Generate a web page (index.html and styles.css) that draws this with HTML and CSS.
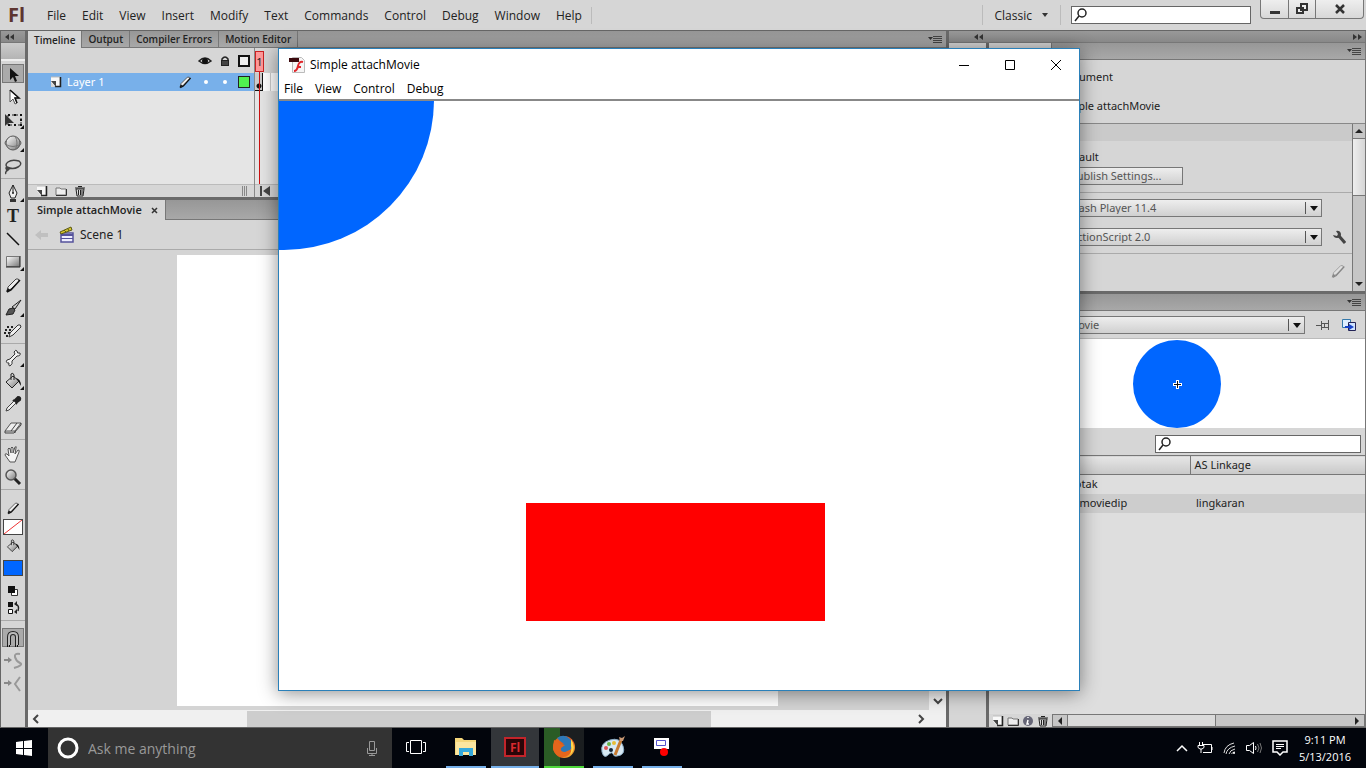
FILE: index.html
```
<!DOCTYPE html>
<html lang="en">
    <head>
        <meta charset="utf-8" />
        <title>Simple attachMovie</title>
        <link rel="stylesheet" href="styles.css">
    </head>
    <body>
        <svg class="defs" width="0" height="0" aria-hidden="true">
            <defs>
                <linearGradient id="shade" x1="0" y1="0" x2="1" y2="1"><stop offset="0" stop-color="#fff" /><stop offset="1" stop-color="#777" /></linearGradient>
                <linearGradient id="fox" x1="0" y1="0" x2="1" y2="1"><stop offset="0" stop-color="#e8701a" /><stop offset=".55" stop-color="#e0531a" /><stop offset="1" stop-color="#ffd23c" /></linearGradient>
                <symbol id="newpage" viewBox="0 0 12 12"><path d="M1 1h9v9H1z" fill="#f8f8f8" /><path d="M1 1h9v9" fill="none" stroke="#bbb" /><path d="M10.500 1v9.500H5" fill="none" stroke="#222" stroke-width="1.500" /><path d="M1 5h5v6z" fill="#444" /><path d="M1 6v5h4z" fill="#d6d6d6" /></symbol>
                <symbol id="folder" viewBox="0 0 12 12"><path d="M1 3h4l1 1h5v6H1z" fill="#eee" stroke="#777" /><path d="M1 10.500h10.500V4" fill="none" stroke="#333" /></symbol>
                <symbol id="trash" viewBox="0 0 12 12"><path d="M2 4h8l-1 7H3z" fill="#ddd" stroke="#222" /><path d="M1 3h10M4 1.500h4M4.500 5v5M6.500 5v5M8 5v5" stroke="#222" fill="none" /></symbol>
                <symbol id="lens" viewBox="0 0 14 14"><circle cx="8" cy="5" r="4" fill="none" stroke="#222" stroke-width="1.500" /><path d="M5 8l-4 5" stroke="#222" stroke-width="1.500" /></symbol>
                <symbol id="panelmenu" viewBox="0 0 14 9"><path d="M0 2h5L2.500 5z" fill="#333" /><path d="M5 1.500h9M5 3.500h9M5 5.500h9M5 7.500h9" stroke="#444" /></symbol>
                <symbol id="collapse" viewBox="0 0 9 6"><path d="M4 0v6L0 3zM9 0v6L5 3z" fill="#333" /></symbol>
                <symbol id="pencil" viewBox="0 0 20 20"><path d="M4 16l1-4 8-8q3-1 3 2l-8 8z" fill="#eee" stroke="#444" /><path d="M17 5l-9 10-4 2" fill="none" stroke="#111" stroke-width="1.500" /><path d="M3 17l2-4 2 2z" fill="#111" /></symbol>
                <symbol id="bucket" viewBox="0 0 20 20"><path d="M3 11l7-6 6 5-7 7z" fill="url(#shade)" stroke="#222" /><path d="M8 9V3q2-2 3 1v5" fill="none" stroke="#222" /><path d="M13 7q5 1 5 8l-3-5z" fill="#111" /></symbol>
            </defs>
        </svg>
        <div class="desktop">
            <header class="menubar">
                <div class="logo">Fl</div>
                <nav class="menu">
                    <a href="#">File</a>
                    <a href="#">Edit</a>
                    <a href="#">View</a>
                    <a href="#">Insert</a>
                    <a href="#">Modify</a>
                    <a href="#">Text</a>
                    <a href="#">Commands</a>
                    <a href="#">Control</a>
                    <a href="#">Debug</a>
                    <a href="#">Window</a>
                    <a href="#">Help</a>
                </nav>
                <button class="classic">Classic <svg width="6" height="4"><path d="M0 0h6L3 4z" fill="#333" /></svg></button>
                <label class="search">
                    <svg width="14" height="14"><use href="#lens" /></svg>
                    <input type="text" aria-label="Search help">
                </label>
                <div class="winbuttons">
                    <button aria-label="Minimize"><svg width="12" height="12"><path d="M1 8h10v3H1z" fill="#333" /></svg></button>
                    <button aria-label="Restore"><svg width="12" height="12"><path d="M5 1h6v6H5zM1 5h6v5H1z" fill="#eee" stroke="#333" stroke-width="2" /></svg></button>
                    <button aria-label="Close"><svg width="12" height="12"><path d="M2 2l8 8M10 2l-8 8" stroke="#333" stroke-width="2.500" /></svg></button>
                </div>
            </header>

            <div class="workspace">
                <aside class="tools">
                    <div class="strip"><svg width="9" height="6"><use href="#collapse" /></svg></div>
                    <div class="grip"></div>
                    <div class="group">
                        <button class="tool on" aria-label="Selection"><svg width="20" height="20"><path d="M7 3v12l3-3 2 5 2-1-2-5h4z" fill="#111" /></svg></button>
                        <button class="tool" aria-label="Subselection"><svg width="20" height="20"><path d="M7 3v12l3-3 2 5 2-1-2-5h4z" fill="#fff" stroke="#555" /><path d="M7 3l9 8h-4l2 5" fill="none" stroke="#111" stroke-width="1.500" /></svg></button>
                        <button class="tool more" aria-label="Free transform"><svg width="20" height="20"><path d="M5 5h13v10H5z" fill="none" stroke="#222" stroke-dasharray="2 2" /><path d="M5 4h2v2H5zM11 4h2v2h-2zM17 4h2v2h-2zM17 9h2v2h-2zM17 14h2v2h-2zM11 14h2v2h-2zM5 14h2v2H5z" fill="#111" /><path d="M2 4v12l3-3h6z" fill="#333" /></svg></button>
                        <button class="tool more" aria-label="3D rotation"><svg width="20" height="20"><ellipse cx="10" cy="10" rx="8" ry="5" fill="none" stroke="#666" /><circle cx="10" cy="10" r="7" fill="url(#shade)" stroke="#555" /><path d="M2 11q8 5 16 0M12 3q4 7 0 14" fill="none" stroke="#777" /></svg></button>
                        <button class="tool" aria-label="Lasso"><svg width="20" height="20"><path d="M5 12q-4-3 0-6t11-1q4 3-1 6t-11 0q-2 1 0 3-2 3-1 4M3 12l3 1-2 2" fill="none" stroke="#444" stroke-width="1.500" /></svg></button>
                    </div>
                    <div class="group">
                        <button class="tool more" aria-label="Pen"><svg width="20" height="20"><path d="M10 2l4 8-2 5H8l-2-5z" fill="#eee" stroke="#222" /><path d="M10 2v8" stroke="#222" /><circle cx="10" cy="10" r="1" fill="#222" /><path d="M7 16h6v3H7z" fill="#333" /></svg></button>
                        <button class="tool letter" aria-label="Text">T</button>
                        <button class="tool" aria-label="Line"><svg width="20" height="20"><path d="M4 4l12 12" stroke="#111" stroke-width="1.500" /></svg></button>
                        <button class="tool more" aria-label="Rectangle"><svg width="20" height="20"><path d="M3.500 4.500h13v10h-13z" fill="url(#shade)" stroke="#777" /><path d="M3 15h14V4" fill="none" stroke="#222" /></svg></button>
                        <button class="tool" aria-label="Pencil"><svg width="20" height="20"><use href="#pencil" /></svg></button>
                        <button class="tool more" aria-label="Brush"><svg width="20" height="20"><path d="M18 2l-9 7 3 2z" fill="#ccc" stroke="#222" /><path d="M3 17l3-6 4-1 2 2-2 4z" fill="#555" stroke="#222" /></svg></button>
                        <button class="tool" aria-label="Deco"><svg width="20" height="20"><path d="M4 6h8M2 9h8M1 12h6M3 15h3" stroke="#222" stroke-width="2" stroke-dasharray="2 2" /><path d="M6 16l1-4 8-8q3-1 3 2l-8 8z" fill="#eee" stroke="#333" /></svg></button>
                    </div>
                    <div class="group">
                        <button class="tool more" aria-label="Bone"><svg width="20" height="20"><path d="M4 12l3-1 5-5-1-2q2-3 3-1 0 3 3 2 1 3-3 3l-5 5q1 3-2 5-2 0-1-3-4 0-2-3z" fill="#f2f2f2" stroke="#333" /></svg></button>
                        <button class="tool more" aria-label="Paint bucket"><svg width="20" height="20"><use href="#bucket" /></svg></button>
                        <button class="tool" aria-label="Eyedropper"><svg width="20" height="20"><path d="M10 6l4 4M11 7l4-4q3 0 2 3l-4 3z" fill="#222" stroke="#222" stroke-width="2" /><path d="M11 7L4 14l-1 3 3-1 7-7z" fill="#eee" stroke="#444" /></svg></button>
                        <button class="tool" aria-label="Eraser"><svg width="20" height="20"><path d="M2 14l6-8h10l-6 8z" fill="#eee" stroke="#555" /><path d="M2 14v2h9l7-8V6M8 14l6-8M12 14v2" fill="none" stroke="#444" /></svg></button>
                    </div>
                    <div class="group">
                        <button class="tool" aria-label="Hand"><svg width="20" height="20"><path d="M7 18l-5-7q0-2 2-1l2 2-1-7q1-2 2 0l1 4V4q1-2 2 0v5l2-6q2-1 1 1l-1 6 3-4q2 0 1 2l-2 5-2 5z" fill="#f4f4f4" stroke="#555" /></svg></button>
                        <button class="tool" aria-label="Zoom"><svg width="20" height="20"><path d="M11 11l6 6" stroke="#222" stroke-width="3" /><circle cx="8" cy="8" r="5" fill="url(#shade)" stroke="#555" stroke-width="1.500" /></svg></button>
                    </div>
                    <div class="group colors">
                        <button class="tool" aria-label="Stroke color"><svg width="16" height="16" viewBox="0 0 20 20"><use href="#pencil" /></svg></button>
                        <button class="swatch" aria-label="No stroke"><svg width="18" height="14"><path d="M0 14L18 0" stroke="#e33" /></svg></button>
                        <button class="tool" aria-label="Fill color"><svg width="16" height="16" viewBox="0 0 20 20"><use href="#bucket" /></svg></button>
                        <button class="swatch fill" aria-label="Blue fill"></button>
                        <button class="tool short" aria-label="Black and white"><svg width="12" height="12"><path d="M4.500 4.500h6v6h-6z" fill="#fff" stroke="#333" /><path d="M1 1h7v7H1z" fill="#111" /></svg></button>
                        <button class="tool short" aria-label="Swap colors"><svg width="14" height="14"><path d="M2 1h5v5H2z" fill="#111" /><path d="M2.500 8.500h4v4h-4z" fill="#fff" stroke="#111" /><path d="M9 3q5 1 3 7" fill="none" stroke="#222" stroke-width="1.500" /><path d="M8 3l3-3v5zM8 11l3-3v5z" fill="#222" /></svg></button>
                    </div>
                    <div class="group options">
                        <button class="tool on" aria-label="Snap to objects"><svg width="20" height="20"><path d="M6 16V8q0-4 4-4t4 4v8" fill="none" stroke="#222" stroke-width="4" /><path d="M6 16V8q0-4 4-4t4 4v8" fill="none" stroke="#bbb" stroke-width="2" /><path d="M4 17h4M12 17h4" stroke="#111" stroke-width="2" stroke-dasharray="1 1" /></svg></button>
                        <button class="tool" aria-label="Smooth"><svg width="20" height="20"><path d="M1 9h5" stroke="#888" stroke-width="2" /><path d="M5 6l4 3-4 3z" fill="#888" /><path d="M17 3q-6-1-5 3t5 6-6 5" fill="none" stroke="#999" stroke-width="2" /></svg></button>
                        <button class="tool" aria-label="Straighten"><svg width="20" height="20"><path d="M1 9h5" stroke="#888" stroke-width="2" /><path d="M5 6l4 3-4 3z" fill="#888" /><path d="M17 3l-5 7 5 7" fill="none" stroke="#999" stroke-width="2" /></svg></button>
                    </div>
                </aside>

                <main class="editor">
                    <section class="timeline">
                        <div class="tabs">
                            <button class="tab active">Timeline</button>
                            <button class="tab">Output</button>
                            <button class="tab">Compiler Errors</button>
                            <button class="tab">Motion Editor</button>
                            <svg class="panelmenu" width="14" height="9"><use href="#panelmenu" /></svg>
                        </div>
                        <div class="timebody">
                            <div class="layers">
                                <div class="layerhead">
                                    <svg width="14" height="12"><path d="M1 6q6-6 12 0-6 5-12 0z" fill="#ddd" stroke="#222" stroke-width="1.500" /><circle cx="7" cy="6" r="3" fill="#111" /></svg>
                                    <svg width="12" height="12"><path d="M3 6V4q3-4 6 0v2" fill="none" stroke="#222" stroke-width="1.500" /><path d="M2 5h8v6H2z" fill="#222" /><path d="M3 7h6M3 9h6" stroke="#666" /></svg>
                                    <svg width="12" height="12"><path d="M1 1h10v10H1z" fill="#eee" stroke="#111" stroke-width="2" /></svg>
                                </div>
                                <div class="layer">
                                    <svg width="12" height="12"><use href="#newpage" /></svg>
                                    <span class="layername">Layer 1</span>
                                    <svg width="16" height="16" viewBox="0 0 20 20"><use href="#pencil" /></svg>
                                    <i class="dot"></i>
                                    <i class="dot"></i>
                                    <i class="outline"></i>
                                </div>
                                <div class="layerfoot">
                                    <svg width="12" height="12"><use href="#newpage" /></svg>
                                    <svg width="12" height="12"><use href="#folder" /></svg>
                                    <svg width="12" height="12"><use href="#trash" /></svg>
                                    <svg class="splitter" width="6" height="10"><path d="M.5 0v10M2.500 0v10M4.500 0v10" stroke="#888" /></svg>
                                </div>
                            </div>
                            <div class="frames">
                                <div class="ruler"><span class="playhead">1</span></div>
                                <div class="framerow"><span class="keyframe"></span></div>
                                <div class="framefoot"><svg width="12" height="10"><path d="M1 0h2v10H1zM11 0v10L4 5z" fill="#444" /></svg></div>
                            </div>
                        </div>
                    </section>
                    <section class="document">
                        <div class="tabs doctabs">
                            <button class="tab active">Simple attachMovie <svg width="7" height="7"><path d="M1 1l5 5M6 1L1 6" stroke="#333" stroke-width="1.500" /></svg></button>
                        </div>
                        <div class="editbar">
                            <svg width="14" height="12"><path d="M0 6l6-5v3h7v4H6v3z" fill="#c0c0c0" /></svg>
                            <svg width="16" height="18"><path d="M2 7h12v9H2z" fill="#eef" stroke="#55539c" stroke-width="1.500" /><path d="M2 8h12v2H2zM2 12h12v1H2z" fill="#55539c" /><path d="M1 6l11-5 1 3-11 4z" fill="#d5c52a" stroke="#5c5a15" /><path d="M5 4l2 2M9 3l1 2" stroke="#5c5a15" /></svg>
                            <span>Scene 1</span>
                        </div>
                        <div class="stagerow">
                            <div class="pasteboard"><div class="stage"></div></div>
                            <div class="vscroll"><svg width="10" height="8"><path d="M1 1l4 4 4-4" fill="none" stroke="#444" stroke-width="2" /></svg></div>
                        </div>
                        <div class="hscroll">
                            <svg width="8" height="10"><path d="M6 1L2 5l4 4" fill="none" stroke="#444" stroke-width="2" /></svg>
                            <div class="track"><div class="thumb"></div></div>
                            <svg width="8" height="10"><path d="M2 1l4 4-4 4" fill="none" stroke="#444" stroke-width="2" /></svg>
                        </div>
                    </section>
                </main>

                <div class="docks">
                    <div class="strip">
                        <svg width="9" height="6"><use href="#collapse" /></svg>
                        <svg width="9" height="6" viewBox="0 0 9 6"><path d="M0 0v6l4-3zM5 0v6l4-3z" fill="#333" /></svg>
                    </div>
                    <div class="columns">
                        <div class="icondock"></div>
                        <div class="panels">
                            <section class="properties">
                                <div class="tabs"><span class="tab active blank"></span><svg class="panelmenu" width="14" height="9"><use href="#panelmenu" /></svg></div>
                                <div class="docinfo">
                                    <p>Document</p>
                                    <p>Simple attachMovie</p>
                                </div>
                                <div class="scroller">
                                    <div class="settings">
                                        <div class="sectionhead"></div>
                                        <div class="publish">
                                            <span>Default</span>
                                            <button class="push">Publish Settings...</button>
                                        </div>
                                        <div class="targets">
                                            <span class="drop"><select aria-label="Player"><option>Flash Player 11.4</option></select><svg width="14" height="14"><path d="M1.500 1v12" stroke="#555" /><path d="M6 5h8l-4 5z" fill="#111" /></svg></span>
                                            <span class="drop"><select aria-label="Script"><option>ActionScript 2.0</option></select><svg width="14" height="14"><path d="M1.500 1v12" stroke="#555" /><path d="M6 5h8l-4 5z" fill="#111" /></svg></span>
                                            <svg width="14" height="14"><path d="M7 6l6 7" stroke="#444" stroke-width="3" /><path d="M4 1q4-1 5 3 0 4-4 4-3 0-4-3l4 1 1-2z" fill="#444" /></svg>
                                        </div>
                                        <div class="profile"><svg width="18" height="18" viewBox="0 0 20 20" opacity=".4"><use href="#pencil" /></svg></div>
                                    </div>
                                    <div class="vbar">
                                        <svg width="12" height="14"><path d="M2 9h8L6 5z" fill="#222" /></svg>
                                        <div class="vthumb"></div>
                                        <svg width="12" height="14"><path d="M2 5h8l-4 4z" fill="#222" /></svg>
                                    </div>
                                </div>
                            </section>
                            <section class="library">
                                <div class="tabs"><svg class="panelmenu" width="14" height="9"><use href="#panelmenu" /></svg></div>
                                <div class="libpick">
                                    <span class="drop"><select aria-label="Library document"><option>Simple attachMovie</option></select><svg width="14" height="14"><path d="M1.500 1v12" stroke="#555" /><path d="M6 5h8l-4 5z" fill="#111" /></svg></span>
                                    <svg width="14" height="12"><path d="M0 6.500h5M5.500 2v9M8.500 4v5M12.500 1v10M5 4.500h8M5 8.500h8" fill="none" stroke="#555" /></svg>
                                    <svg width="16" height="14"><path d="M1.500 1.500h8v8h-8z" fill="#ddeeff" stroke="#3478aa" /><path d="M7.500 4.500h7v8h-7z" fill="#cfe3ff" stroke="#225" /><path d="M4 8h4V6l5 3-5 3v-2H4z" fill="#1742c8" /></svg>
                                </div>
                                <div class="preview">
                                    <svg width="88" height="88"><circle cx="44" cy="44" r="44" fill="#0066ff" /><path d="M40 44.500h9M44.500 40v9" stroke="#fff" stroke-width="3" /><path d="M41 44.500h7M44.500 41v7" stroke="#111" /></svg>
                                </div>
                                <div class="libsearch">
                                    <label class="search">
                                        <svg width="14" height="14"><use href="#lens" /></svg>
                                        <input type="text" aria-label="Search library">
                                    </label>
                                </div>
                                <table class="items">
                                    <thead>
                                        <tr><th></th><th>AS Linkage</th></tr>
                                    </thead>
                                    <tbody>
                                        <tr><td>kotak</td><td></td></tr>
                                        <tr class="picked"><td>lingkaran_moviedip</td><td>lingkaran</td></tr>
                                    </tbody>
                                </table>
                                <div class="libfoot">
                                    <svg width="12" height="12"><use href="#newpage" /></svg>
                                    <svg width="12" height="12"><use href="#folder" /></svg>
                                    <svg width="12" height="12"><circle cx="6" cy="6" r="5" fill="#667" /><path d="M6 5l-1 4h2M6 2v1" stroke="#fff" stroke-width="1.500" fill="none" /></svg>
                                    <svg width="12" height="12"><use href="#trash" /></svg>
                                    <div class="hbar">
                                        <svg width="14" height="10"><path d="M9 1v8L5 5z" fill="#222" /></svg>
                                        <div class="hthumb"></div>
                                        <svg width="14" height="10"><path d="M5 1v8l4-4z" fill="#222" /></svg>
                                    </div>
                                </div>
                            </section>
                        </div>
                    </div>
                </div>
            </div>

            <footer class="taskbar">
                <button class="start" aria-label="Start"><svg width="16" height="16"><path d="M0 2l7-1v7H0zM8 1l8-1v8H8zM0 9h7v6l-7-1zM8 9h8v7l-8-1z" fill="#fff" /></svg></button>
                <label class="cortana">
                    <svg width="22" height="22"><circle cx="11" cy="11" r="9" fill="none" stroke="#fff" stroke-width="3" /></svg>
                    <input type="text" aria-label="Search" placeholder="Ask me anything">
                    <svg width="12" height="16"><path d="M3.500 1.500h5v9h-5zM1.500 8v5.500h9V8M6 13v3M3 15.500h6" fill="none" stroke="#999" /></svg>
                </label>
                <div class="apps">
                    <button class="app plain" aria-label="Task view"><svg width="20" height="16"><path d="M4.500 1.500h11v13h-11zM3 3.500H.5v9H3M17 3.500h2.500v9H17" fill="none" stroke="#fff" /></svg></button>
                    <button class="app" aria-label="File Explorer"><svg width="22" height="20"><path d="M0 1h7l2 2h12v15H0z" fill="#f5d77b" /><path d="M1 5h20v13H1z" fill="#fbe6a0" /><path d="M4 11h14v8h-4v-4H8v4H4z" fill="#35a9dc" /></svg></button>
                    <button class="app current" aria-label="Flash"><span class="flicon">Fl</span></button>
                    <button class="app firefox" aria-label="Firefox"><svg width="24" height="24"><circle cx="12" cy="12" r="11" fill="url(#fox)" /><path d="M5 3q7-5 13 1 4 5 1 10t-9 4q-5-3-2-7l4-2-4-3z" fill="#2d78b8" /><path d="M2 5q4 1 6 4l5 1-4 3q-1 4 4 4l7-3q-3 9-10 8T1 14z" fill="#e4661c" /><path d="M19 4q6 9-1 16 2-5 1-9z" fill="#ffd84c" /></svg></button>
                    <button class="app" aria-label="Paint"><svg width="26" height="24"><path d="M2 17Q0 8 10 5t13 6-6 10q-3 1-4-2t-5 1-6-3z" fill="#d7e9f4" stroke="#8bacc4" /><circle cx="6" cy="13" r="2" fill="#d55" /><circle cx="9" cy="9" r="2" fill="#68b447" /><circle cx="14" cy="8" r="2" fill="#e7bd36" /><circle cx="11" cy="15" r="2" fill="#123" /><path d="M15 20l6-15" stroke="#c77b32" stroke-width="3" /><path d="M20 6l-1-4 3 1 3-2-2 5z" fill="#c99873" /></svg></button>
                    <button class="app" aria-label="Flash Player"><svg width="18" height="20"><path d="M1 1h15v11H1z" fill="#fff" /><path d="M3.500 3.500h9v5h-9z" fill="none" stroke="#5553cc" /><circle cx="11" cy="15" r="4" fill="#f00" /></svg></button>
                </div>
                <div class="tray">
                    <svg width="12" height="8"><path d="M1 7l5-5 5 5" fill="none" stroke="#fff" stroke-width="1.500" /></svg>
                    <svg width="16" height="12"><path d="M5 2.500h9.500v8H6M15 5v3M2.500 0v3M5.500 0v3M1 3.500h6v2L5 7H3L1 5.500zM4 7v4" fill="none" stroke="#fff" /></svg>
                    <svg width="14" height="14"><path d="M2 12Q3 4 12 2M4 13q1-6 9-8M7 13q1-4 6-5M9.500 13q1-2 3.500-2" fill="none" stroke="#ddd" /><circle cx="12" cy="12" r="1" fill="#fff" /></svg>
                    <svg width="18" height="14"><path d="M1.500 4.500h3l4-3v11l-4-3h-3z" fill="none" stroke="#fff" /><path d="M10.500 5q1 2 0 4" fill="none" stroke="#fff" /><path d="M12.500 3q3 4 0 8M15 2q3 5 0 10" fill="none" stroke="#777" /></svg>
                    <svg width="16" height="16"><path d="M1 1h14v11h-4l-3 3-3-3H1z" fill="none" stroke="#fff" stroke-width="1.500" /><path d="M4 4.500h8M4 6.500h8M4 8.500h5" stroke="#fff" /></svg>
                    <div class="clock"><span>9:11 PM</span><span>5/13/2016</span></div>
                </div>
            </footer>

            <div class="player">
                <div class="titlebar">
                    <svg width="16" height="16"><path d="M3.500.5h9l3 3v12h-12z" fill="#f5f5f5" stroke="#bbb" /><path d="M0 1h10v4H0z" fill="#3c0a0e" /><path d="M5 14q3 0 4-5t5-4M8 10h4" fill="none" stroke="#e0262b" stroke-width="2" /></svg>
                    <span class="title">Simple attachMovie</span>
                    <button aria-label="Minimize"><svg width="12" height="12"><path d="M1 6.500h10" stroke="#000" /></svg></button>
                    <button aria-label="Maximize"><svg width="12" height="12"><path d="M1.500 1.500h9v9h-9z" fill="none" stroke="#000" /></svg></button>
                    <button aria-label="Close"><svg width="12" height="12"><path d="M1 1l10 10M11 1L1 11" stroke="#000" /></svg></button>
                </div>
                <nav class="playermenu">
                    <a href="#">File</a>
                    <a href="#">View</a>
                    <a href="#">Control</a>
                    <a href="#">Debug</a>
                </nav>
                <svg class="movie" viewBox="0 0 800 589">
                    <circle cx="5" cy="-1" r="150" fill="#0066ff" />
                    <rect x="247" y="402" width="299" height="118" fill="#ff0000" />
                </svg>
            </div>
        </div>
    </body>
</html>
```
FILE: styles.css
```
* {
    box-sizing: border-box;
}
body {
    margin: 0;
    font-family: "Noto Sans", "Open Sans", sans-serif;
    font-size: 11px;
    color: #222;
    background-color: #d6d6d6;
}
button, input, select {
    font: inherit;
    color: inherit;
    margin: 0;
    padding: 0;
    border: 0;
    background: none;
}
a {
    color: inherit;
    text-decoration: none;
}
p {
    margin: 0;
}
svg {
    flex: none;
    display: block;
}
.defs {
    position: absolute;
}
.desktop {
    position: relative;
    display: flex;
    flex-direction: column;
    height: 100vh;
    min-height: 740px;
    overflow: hidden;
}

/* application menu */
.menubar {
    display: flex;
    align-items: center;
    height: 30px;
    padding-right: 2px;
    background-color: #d6d6d6;
    font-family: "Open Sans", sans-serif;
    font-size: 12px;
}
.logo {
    width: 39px;
    padding-left: 8px;
    font-size: 20px;
    font-weight: bold;
    line-height: 28px;
    color: #5d3530;
}
.menu {
    display: flex;
    flex: 1;
}
.menu a {
    padding: 0 8px;
}
.menu a:last-child {
    padding-right: 9px;
    border-right: 1px solid #bbb;
}
.classic {
    display: flex;
    align-items: center;
    gap: 10px;
    height: 20px;
    padding: 0 12px;
    border: solid #bbb;
    border-width: 0 1px;
}
.search {
    display: flex;
    align-items: center;
    height: 18px;
    padding: 0 2px;
    background-color: #fff;
    border: 1px solid #666;
}
.search input {
    flex: 1;
    min-width: 0;
    outline: none;
}
.menubar .search {
    width: 180px;
    margin: 0 9px 0 10px;
}
.winbuttons {
    display: flex;
    align-self: flex-start;
    height: 19px;
    border: 1px solid #777;
    border-top: 0;
    border-radius: 0 0 4px 4px;
    background: linear-gradient(#eee, #d8d8d8);
}
.winbuttons button {
    display: grid;
    place-items: center;
    width: 27px;
}
.winbuttons button + button {
    border-left: 1px solid #777;
}
.winbuttons button:last-child {
    width: 48px;
}

/* shared panel parts */
.workspace {
    display: flex;
    flex: 1;
    min-height: 0;
    border-top: 1px solid #666;
    border-bottom: 1px solid #666;
}
.strip {
    display: flex;
    justify-content: space-between;
    align-items: center;
    height: 12px;
    padding: 0 4px;
    background: linear-gradient(#999, #888);
    border-bottom: 1px solid #777;
}
.tabs {
    display: flex;
    height: 17px;
    background: linear-gradient(#979797, #a8a8a8);
    border-bottom: 1px solid #777;
}
.tab {
    padding: 0 6px;
    font-family: "Open Sans", sans-serif;
    font-weight: 600;
    font-size: 10px;
    line-height: 16px;
    color: #222;
    border-right: 1px solid #777;
}
.tab.active {
    margin-bottom: -1px;
    background-color: #d6d6d6;
}
.panelmenu {
    margin: 4px 4px 0 auto;
}

/* tools */
.tools {
    width: 28px;
    border-left: 1px solid #666;
    border-right: 3px solid #6a6a6a;
    background-color: #d6d6d6;
}
.grip {
    height: 18px;
    margin-bottom: 1px;
    background: linear-gradient(#ccc, #b4b4b4);
    border-bottom: 2px solid #eee;
}
.group {
    display: flex;
    flex-direction: column;
    align-items: center;
    padding-bottom: 1px;
    margin-bottom: 2px;
    border-bottom: 1px solid #aaa;
}
.tool {
    position: relative;
    display: grid;
    place-items: center;
    width: 22px;
    height: 23px;
}
.tool.on {
    height: 19px;
    margin: 2px 0;
    background-color: #aaa;
    border: 1px solid #777;
}
.tool.more::after {
    content: "";
    position: absolute;
    right: 0;
    bottom: 2px;
    border: 2px solid;
    border-color: transparent #111 #111 transparent;
}
.letter {
    font-family: "Liberation Serif", serif;
    font-weight: bold;
    font-size: 18px;
    line-height: 22px;
}
.colors {
    padding: 5px 0 4px;
}
.colors .tool {
    height: 22px;
}
.colors .short {
    height: 17px;
}
.short:nth-child(5) {
    margin-top: 3px;
}
.swatch {
    width: 20px;
    height: 16px;
    background-color: #fff;
    border: 1px solid #444;
}
.swatch.fill {
    margin: 3px 0;
    background-color: #0066ff;
}
.options {
    border-bottom: 0;
    padding-top: 3px;
}

/* timeline */
.editor {
    display: flex;
    flex-direction: column;
    flex: 1;
    min-width: 0;
}
.timebody {
    display: flex;
    height: 152px;
    border-bottom: 3px solid #6a6a6a;
}
.layers {
    display: flex;
    flex-direction: column;
    width: 227px;
    background-color: #e5e5e5;
    border-right: 1px solid #888;
}
.layerhead {
    display: flex;
    justify-content: flex-end;
    align-items: center;
    gap: 7px;
    height: 25px;
    padding-right: 4px;
    background-color: #d6d6d6;
}
.layer {
    display: flex;
    align-items: center;
    height: 18px;
    padding: 0 4px 0 22px;
    background-color: #78b0ea;
}
.layername {
    flex: 1;
    padding-left: 5px;
    line-height: 14px;
    color: #fff;
}
.dot {
    width: 4px;
    height: 4px;
    margin-left: 15px;
    border-radius: 50%;
    background-color: #fff;
}
.layer svg + .dot {
    margin-left: 11px;
}
.outline {
    width: 12px;
    height: 12px;
    margin-left: 11px;
    background-color: #50f050;
    border: 1px solid #222;
}
.layerfoot {
    display: flex;
    align-items: center;
    gap: 7px;
    height: 13px;
    margin-top: auto;
    padding: 0 6px 0 8px;
    background-color: #d6d6d6;
    border-top: 1px solid #bbb;
}
.splitter {
    margin-left: auto;
}
.frames {
    display: flex;
    flex-direction: column;
    flex: 1;
    background-color: #e5e5e5;
}
.ruler {
    height: 25px;
    padding-top: 3px;
    background-color: #d6d6d6;
}
.playhead {
    position: relative;
    display: block;
    width: 9px;
    height: 21px;
    line-height: 19px;
    text-align: center;
    background-color: #f99;
    border: 1px solid #c22;
}
.playhead::after {
    content: "";
    position: absolute;
    left: 3px;
    top: 20px;
    width: 1px;
    height: 112px;
    background-color: #c11;
}
.framerow {
    height: 18px;
    background: repeating-linear-gradient(90deg, #fff 0 7px, #ccc 7px 8px);
}
.keyframe {
    display: block;
    width: 8px;
    height: 18px;
    border: solid #111;
    border-width: 0 1px 1px 0;
    background: radial-gradient(circle at 4px 13px, #111 2px, #ccc 3px);
}
.framefoot {
    height: 13px;
    margin-top: auto;
    padding: 1px 4px;
    background-color: #d6d6d6;
    border-top: 1px solid #bbb;
}

/* document window */
.document {
    display: flex;
    flex-direction: column;
    flex: 1;
    min-height: 0;
}
.doctabs {
    height: 20px;
}
.doctabs .tab {
    display: flex;
    align-items: center;
    gap: 9px;
    padding: 0 7px 0 9px;
    font-size: 11px;
}
.editbar {
    display: flex;
    align-items: center;
    gap: 5px;
    height: 30px;
    padding-left: 7px;
    font-size: 12px;
    border-bottom: 1px solid #aaa;
}
.editbar svg:first-child {
    margin-right: 5px;
}
.stagerow {
    display: flex;
    flex: 1;
    min-height: 0;
}
.pasteboard {
    display: flex;
    justify-content: center;
    flex: 1;
    padding: 5px 2px 4px 0;
    background-color: #d4d4d4;
}
.stage {
    width: 601px;
    background-color: #fff;
}
.vscroll {
    display: flex;
    justify-content: center;
    align-items: flex-end;
    width: 17px;
    padding-bottom: 4px;
    background-color: #f0f0f0;
}
.hscroll {
    display: flex;
    align-items: center;
    height: 17px;
    padding: 0 21px 0 4px;
    background-color: #f0f0f0;
}
.track {
    display: grid;
    grid-template-columns: 207fr 464fr 206fr;
    flex: 1;
}
.thumb {
    grid-column: 2;
    height: 16px;
    background-color: #cdcdcd;
}

/* docked panels */
.docks {
    display: flex;
    flex-direction: column;
    width: 420px;
    border-left: 3px solid #6a6a6a;
    border-right: 1px solid #777;
}
.docks > .strip {
    padding: 0 3px 0 25px;
}
.columns {
    display: flex;
    flex: 1;
    min-height: 0;
}
.icondock {
    width: 40px;
    border-right: 3px solid #6a6a6a;
    background-color: #d6d6d6;
}
.panels {
    display: flex;
    flex-direction: column;
    flex: 1;
    min-width: 0;
}
.blank {
    width: 63px;
}
.docinfo {
    height: 63px;
    padding: 2px 0 0 70px;
    line-height: 29px;
}
.scroller {
    display: flex;
    height: 168px;
    border-top: 1px solid #888;
}
.settings {
    flex: 1;
}
.sectionhead {
    height: 17px;
    background-color: #cacaca;
}
.publish {
    display: flex;
    flex-direction: column;
    align-items: flex-start;
    height: 52px;
    padding: 8px 0 0 72px;
    line-height: 15px;
    border-bottom: 1px solid #aaa;
}
.push {
    height: 18px;
    margin-top: 3px;
    padding: 0 20px 0 8px;
    line-height: 14px;
    color: #555;
    border: 1px solid #777;
    background: linear-gradient(#eee, #d0d0d0);
}
.targets {
    display: grid;
    grid-template-columns: 1fr 14px;
    align-items: center;
    gap: 11px 10px;
    padding: 6px 6px 7px 74px;
    border-bottom: 1px solid #aaa;
}
.targets .drop {
    grid-column: 1;
}
.drop {
    position: relative;
    display: block;
}
.drop select {
    display: block;
    width: 100%;
    height: 18px;
    padding: 0 20px 2px 6px;
    color: #555;
    border: 1px solid #777;
    border-radius: 0;
    background: linear-gradient(#eee, #d0d0d0);
    appearance: none;
}
.drop svg {
    position: absolute;
    right: 4px;
    top: 2px;
    pointer-events: none;
}
.profile {
    display: flex;
    justify-content: flex-end;
    padding: 8px 5px 0 0;
}
.vbar {
    display: flex;
    flex-direction: column;
    width: 13px;
    border-left: 1px solid #777;
    background-color: #c6c6c6;
}
.vthumb {
    height: 58px;
    margin-bottom: auto;
    border: solid #777;
    border-width: 1px 0;
    background: linear-gradient(90deg, #eee, #d6d6d6);
}
.library {
    display: flex;
    flex-direction: column;
    flex: 1;
    min-height: 0;
    border-top: 3px solid #6a6a6a;
    background-color: #dedede;
}
.libpick {
    display: flex;
    align-items: center;
    gap: 11px;
    height: 28px;
    padding: 0 8px 0 4px;
    background-color: #d6d6d6;
    border-bottom: 1px solid #bbb;
}
.libpick .drop {
    flex: 1;
}
.libpick select {
    padding-left: 4px;
}
.preview {
    display: flex;
    justify-content: center;
    align-items: flex-end;
    height: 89px;
    background-color: #fff;
}
.libsearch {
    display: flex;
    justify-content: flex-end;
    height: 27px;
    padding: 7px 4px 0;
    background-color: #d6d6d6;
}
.libsearch .search {
    width: 206px;
}
.items {
    width: 100%;
    border-collapse: collapse;
    table-layout: fixed;
}
.items th {
    height: 19px;
    padding: 0 4px;
    text-align: left;
    font-weight: normal;
    line-height: 16px;
    border: solid #777;
    border-width: 1px 0;
    background: linear-gradient(#e6e6e6, #c8c8c8);
}
.items th:first-child {
    width: 201px;
    border-right: 1px solid #777;
}
.items td {
    height: 19px;
    padding: 0 0 0 6px;
    line-height: 16px;
    background-color: #dedede;
}
.items td:first-child {
    padding-left: 37px;
}
.items tr:first-child td:first-child {
    padding-left: 80px;
}
.items .picked td {
    background-color: #cdcdcd;
}
.libfoot {
    display: flex;
    align-items: center;
    gap: 3px;
    height: 13px;
    margin-top: auto;
    padding-left: 3px;
    background-color: #d6d6d6;
}
.hbar {
    display: flex;
    align-items: center;
    flex: 1;
    height: 13px;
    border: 1px solid #777;
    background-color: #c6c6c6;
}
.hthumb {
    width: 48%;
    height: 11px;
    margin-right: auto;
    border: solid #777;
    border-width: 0 1px;
    background-color: #dadada;
}

/* windows taskbar */
.taskbar {
    display: flex;
    height: 40px;
    color: #fff;
    background-color: #02050c;
    font-family: "Open Sans", sans-serif;
    font-size: 12px;
}
.start {
    display: grid;
    place-items: center;
    width: 48px;
}
.cortana {
    display: flex;
    align-items: center;
    gap: 9px;
    width: 344px;
    padding: 0 14px 0 9px;
    background-color: #333;
}
.cortana input {
    flex: 1;
    font-size: 14px;
    outline: none;
}
.cortana input::placeholder {
    color: #999;
    opacity: 1;
}
.apps {
    display: flex;
    flex: 1;
    gap: 9px;
}
.app {
    display: grid;
    place-items: center;
    width: 40px;
    border-bottom: 2px solid #76b0ea;
}
.app.plain {
    width: 48px;
    border-color: transparent;
    margin-right: -3px;
}
.app.current {
    width: 48px;
    margin: 0 -4px;
    background-color: #33363a;
}
.app.firefox {
    background: linear-gradient(90deg, #2a5c25 0 16px, #1b1e20 16px);
    border-color: #4fd93b;
}
.flicon {
    width: 22px;
    height: 20px;
    line-height: 17px;
    font-size: 12px;
    font-weight: bold;
    color: #d8292f;
    background-color: #2a0508;
    border: 2px solid #c3242a;
}
.tray {
    display: flex;
    align-items: center;
    gap: 9px;
    padding-right: 13px;
}
.clock {
    display: flex;
    flex-direction: column;
    width: 56px;
    align-items: center;
    line-height: 17px;
    font-size: 11px;
}

/* flash player window */
.player {
    position: absolute;
    left: 278px;
    top: 48px;
    width: 802px;
    background-color: #fff;
    border: 1px solid #2a80b9;
    box-shadow: 0 2px 18px rgba(0, 0, 0, .45);
    font-family: "Open Sans", sans-serif;
    font-size: 12px;
    color: #000;
}
.titlebar {
    display: flex;
    align-items: center;
    height: 31px;
    padding-left: 10px;
}
.title {
    flex: 1;
    padding-left: 5px;
}
.titlebar button {
    display: grid;
    place-items: center;
    width: 46px;
    height: 30px;
}
.playermenu {
    display: flex;
    gap: 12px;
    height: 21px;
    padding-left: 5px;
    line-height: 17px;
    border-bottom: 2px solid #888;
}
.movie {
    width: 100%;
}
```
